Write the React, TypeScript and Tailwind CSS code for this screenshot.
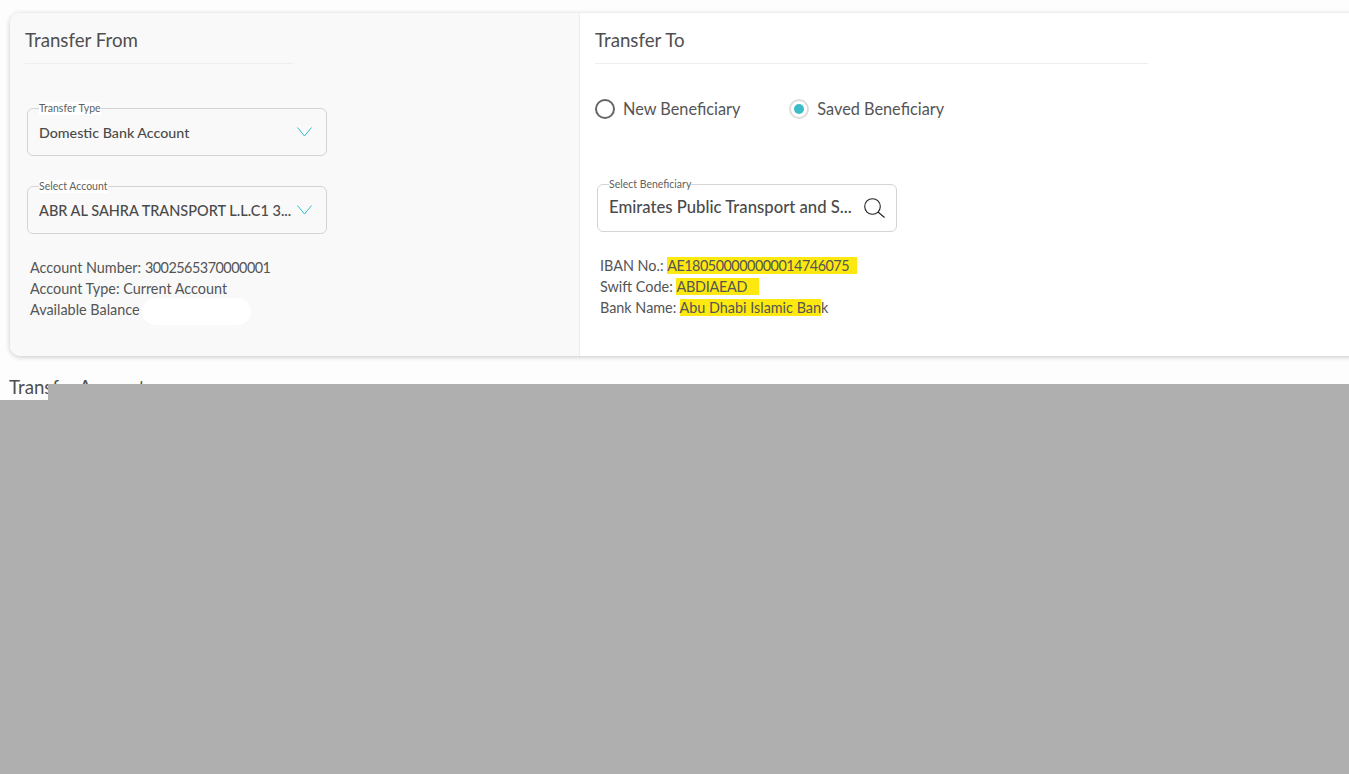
function Field({ label, value, icon, size, mt }: { label: string; value: string; icon: React.ReactNode; size: string; mt: string }) {
  return (
    <div className={`relative ml-[2px] flex h-[48px] w-[300px] items-center justify-between rounded-[6px] border border-[#d4d4d4] pl-[11px] pr-[14px] ${mt}`}>
      <span className="absolute left-[11px] top-[-7px] bg-white text-[10.5px] leading-[13px] text-[#5f5f5f]">{label}</span>
      <span className={`whitespace-nowrap font-medium text-[#4a4a4a] ${size}`}>{value}</span>
      {icon}
    </div>
  );
}

function Chevron() {
  return (
    <svg width="15" height="10" viewBox="0 0 15 10" fill="none" className="shrink-0">
      <path d="M0.5 0.5 L7.5 9 L14.5 0.5" stroke="#2fc0c6" strokeWidth="1" />
    </svg>
  );
}

function SearchGlyph() {
  return (
    <svg width="21" height="20" viewBox="0 0 21 20" fill="none" className="mr-[-3px] shrink-0">
      <circle cx="8.5" cy="8.5" r="7.8" stroke="#222222" strokeWidth="1.1" />
      <path d="M14 14 L20.5 19.5" stroke="#222222" strokeWidth="1.1" />
    </svg>
  );
}

function Mark({ children, className }: { children: React.ReactNode; className?: string }) {
  return <span className={`bg-[#fde910] ${className ?? ''}`}>{children}</span>;
}

export default function App() {
  return (
    <div className="relative h-[774px] w-full overflow-hidden bg-[#fdfdfd] font-['Lato',sans-serif] text-[#555555]">
      <div className="pl-[10px] pt-[13px]">
        <div className="flex h-[343px] w-[1360px] rounded-[10px] bg-white shadow-[0_1px_5px_rgba(0,0,0,0.22)]">
          <section className="w-[570px] shrink-0 rounded-l-[10px] border-r border-[#ececec] bg-[#f9f9f9] pl-[15px] pt-[15px]">
            <h2 className="w-[268px] border-b border-[#eeeeee] pb-[11px] text-[18.7px] leading-[24px] text-[#4f4f4f]">Transfer From</h2>
            <Field label="Transfer Type" value="Domestic Bank Account" icon={<Chevron />} size="pt-[1px] text-[14.25px]" mt="mt-[44px]" />
            <Field label="Select Account" value="ABR AL SAHRA TRANSPORT L.L.C1 3..." icon={<Chevron />} size="pt-[2px] text-[14.5px]" mt="mt-[30px]" />
            <div className="mt-[23px] pl-[5px] text-[14.4px] leading-[21px]">
              <p>Account Number: <span className="tracking-[-0.5px]">3002565370000001</span></p>
              <p>Account Type: Current Account</p>
              <p className="flex items-center">
                Available Balance
                <span className="mb-[-6px] ml-[2px] mt-[-2px] h-[27px] w-[109px] rounded-[14px] bg-white" />
              </p>
            </div>
          </section>

          <section className="flex-1 pl-[15px] pt-[15px]">
            <h2 className="w-[553px] border-b border-[#eeeeee] pb-[11px] text-[18.7px] leading-[24px] text-[#4f4f4f]">Transfer To</h2>
            <div className="mt-[34px] flex h-[22px] items-center text-[16.3px]">
              <span className="h-[20px] w-[20px] rounded-full border-2 border-[#666666]" />
              <span className="ml-[8px]">New Beneficiary</span>
              <span className="ml-[49px] flex h-[20px] w-[20px] items-center justify-center rounded-full border-2 border-[#dddddd]">
                <span className="h-[10px] w-[10px] rounded-full bg-[#3dbcc8]" />
              </span>
              <span className="ml-[8px]">Saved Beneficiary</span>
            </div>
            <Field label="Select Beneficiary" value="Emirates Public Transport and S..." icon={<SearchGlyph />} size="text-[16.7px]" mt="mt-[64px]" />
            <div className="mt-[23px] pl-[5px] text-[14.4px] leading-[21px]">
              <p>IBAN No.: <Mark className="pr-[8px] tracking-[-0.5px]">AE180500000000014746075</Mark></p>
              <p>Swift Code: <Mark className="pr-[12px] tracking-[-0.25px]">ABDIAEAD</Mark></p>
              <p>Bank Name: <Mark>Abu Dhabi Islamic Ban</Mark>k</p>
            </div>
          </section>
        </div>
        <h3 className="ml-[-1px] mt-[19px] text-[18.7px] leading-[24px] text-[#4f4f4f]">Transfer Amount</h3>
      </div>

      {/* redaction block over the rest of the page */}
      <div className="absolute inset-x-0 bottom-0 top-[400px] bg-[#afafaf]" />
      <div className="absolute left-[48px] right-0 top-[384px] h-[16px] bg-[#afafaf]" />
    </div>
  );
}
